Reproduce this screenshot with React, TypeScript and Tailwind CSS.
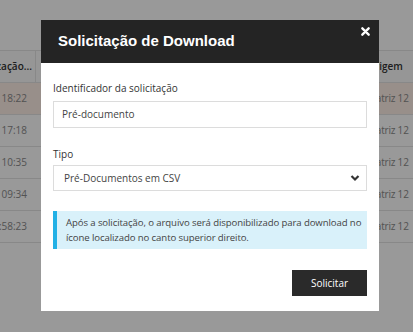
import React from 'react'

const rows = [
  { time: '12/03/2024 18:22', origin: 'Matriz 12', highlight: true },
  { time: '12/03/2024 17:18', origin: 'Matriz 12' },
  { time: '11/03/2024 10:35', origin: 'Matriz 12' },
  { time: '08/03/2024 09:34', origin: 'Matriz 12' },
  { time: '07/03/2024 15:58:23', origin: 'Matriz 12' },
]

// Tabela de fundo (fica atrás do overlay)
const BackgroundTable = () => (
  <div className="pt-[50px] text-[10px] text-[#8a8a8a]" style={{ fontFamily: '"Open Sans", "Liberation Sans", sans-serif' }}>
    <div className="flex h-[33px] items-center border-t border-b border-[#e3e3e3] bg-[#fbfbfb] font-semibold text-[#333]">
      <div className="flex h-full w-[36px] shrink-0 items-center justify-end overflow-hidden border-r border-[#e3e3e3] pr-[3px] whitespace-nowrap">
        Data de atualização...
      </div>
      <div className="flex-1" />
      <div className="w-[46px] shrink-0 whitespace-nowrap">Origem</div>
    </div>
    {rows.map((row, idx) => (
      <div
        key={idx}
        className={`flex h-8 items-center border-b border-[#e3e3e3] ${row.highlight ? 'bg-[#fdeee6]' : 'bg-white'}`}
      >
        <div className="flex w-[36px] shrink-0 justify-end overflow-hidden pr-[9px] whitespace-nowrap">{row.time}</div>
        <div className="flex-1" />
        <div className="w-[46px] shrink-0 whitespace-nowrap tracking-[-0.2px]">{row.origin}</div>
      </div>
    ))}
  </div>
)

export default function App() {
  return (
    <div className="relative h-[332px] w-[413px] overflow-hidden bg-white">
      <BackgroundTable />

      {/* overlay */}
      <div className="absolute inset-0 bg-black/40" />

      {/* modal */}
      <div
        className="absolute left-[41px] top-[20px] w-[338px] bg-white text-[10px] text-[#333]"
        style={{ fontFamily: '"Open Sans", "Liberation Sans", sans-serif' }}
      >
        <div className="relative flex h-[43px] items-center bg-[#242424] pl-[17px]">
          <h2 className="text-[15px] font-bold text-white" style={{ fontFamily: '"Liberation Sans", Arial, sans-serif' }}>
            Solicitação de Download
          </h2>
          <button className="absolute right-[9px] top-[7px] p-0">
            <svg width="9" height="9" viewBox="0 0 10 10">
              <path d="M1.5 1.5 L8.5 8.5 M8.5 1.5 L1.5 8.5" stroke="white" strokeWidth="2.6" strokeLinecap="round" />
            </svg>
          </button>
        </div>

        <div className="px-[12px] pt-[17px] pb-[15px]">
          <label className="block leading-4">Identificador da solicitação</label>
          <div className="mt-[5px] flex h-[27px] items-center border border-[#dcdcdc] px-[8px] text-[#444]">
            Pré-documento
          </div>

          <label className="mt-[18px] block leading-4">Tipo</label>
          <div className="mt-[3px] flex h-[26px] items-center justify-between border border-[#dcdcdc] pl-[10px] pr-[6px] text-[#444]">
            <span>Pré-Documentos em CSV</span>
            <svg width="10" height="8" viewBox="0 0 10 8">
              <path d="M1.5 2 L5 5.5 L8.5 2" fill="none" stroke="#333" strokeWidth="2.2" />
            </svg>
          </div>

          <div className="mt-[20px] border-l-4 border-[#22b1e6] bg-[#d9f1fa] py-[4px] pl-[9px] pr-0 text-[9.6px] leading-[15px] tracking-[-0.1px] text-[#444]">
            Após a solicitação, o arquivo será disponibilizado para download no ícone localizado no canto superior direito.
          </div>

          <div className="mt-[21px] flex justify-end">
            <button className="flex h-[26px] w-[75px] items-center justify-center bg-[#2a2a2a] text-[10px] text-white">
              Solicitar
            </button>
          </div>
        </div>
      </div>
    </div>
  )
}
